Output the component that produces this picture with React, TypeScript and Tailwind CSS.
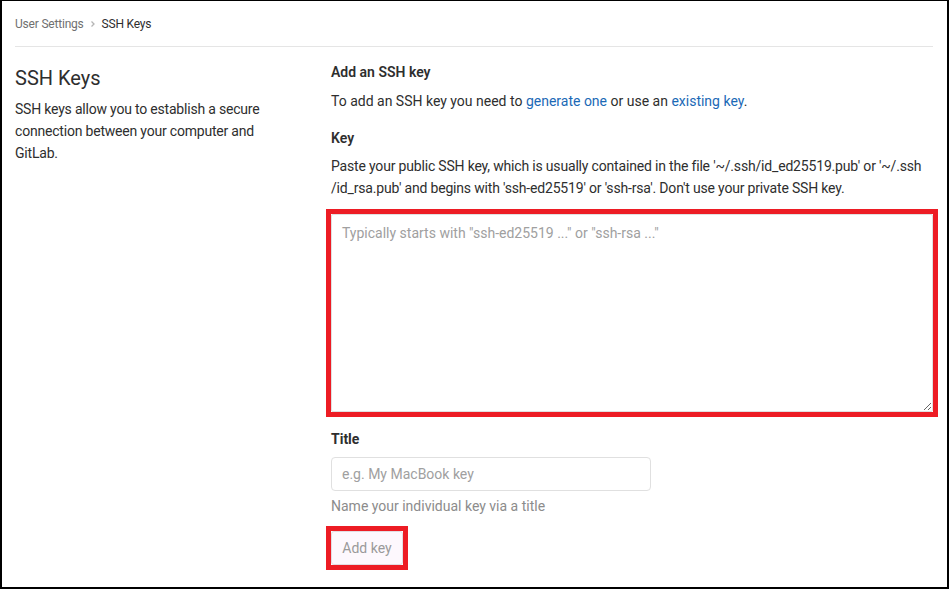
import React from "react";

export default function App() {
  const font = { fontFamily: "Roboto, 'Noto Sans', sans-serif" };
  return (
    <div
      className="w-[949px] h-[589px] bg-white border-black border-l-2 border-t border-r-2 border-b-2 overflow-hidden text-[#2e2e2e]"
      style={font}
    >
      <div className="pl-[13px] pr-[14px]">
        {/* breadcrumb */}
        <div className="h-[46px] flex items-center border-b border-[#e5e5e5] text-[12px] tracking-[-0.2px]">
          <span className="text-[#707070]">User Settings</span>
          <svg width="8" height="8" viewBox="0 0 8 8" className="mx-[5px]">
            <path d="M2.5 1.5 L5 4 L2.5 6.5" fill="none" stroke="#b5b5b5" strokeWidth="1.3" />
          </svg>
          <span className="text-[#2e2e2e]">SSH Keys</span>
        </div>

        <div className="flex gap-[30px]">
          {/* left column */}
          <div className="w-[286px] shrink-0">
            <h4 className="mt-[19px] text-[20px] leading-[24px] text-[#2e2e2e]">SSH Keys</h4>
            <p className="mt-[8px] w-[262px] text-[14px] leading-[22px] tracking-[-0.2px]">
              SSH keys allow you to establish a secure connection between your computer and GitLab.
            </p>
          </div>

          {/* right column */}
          <div className="flex-1 text-[14px]">
            <h5 className="mt-[15px] font-semibold leading-[20px]">Add an SSH key</h5>
            <p className="mt-[9px] leading-[20px]">
              To add an SSH key you need to{" "}
              <span className="text-[#1b69b6]">generate one</span> or use an{" "}
              <span className="text-[#1b69b6]">existing key</span>.
            </p>
            <div className="mt-[17px] font-semibold leading-[20px]">Key</div>
            <p className="mt-[7px] leading-[22px] whitespace-nowrap tracking-[-0.18px]">
              Paste your public SSH key, which is usually contained in the file '~/.ssh/id_ed25519.pub' or '~/.ssh
              <br />
              /id_rsa.pub' and begins with 'ssh-ed25519' or 'ssh-rsa'. Don't use your private SSH key.
            </p>
            <div className="mt-[10px] -ml-[5px] w-[612px] border-[5px] border-[#ed1c24]">
              <textarea
                className="block w-full h-[198px] border border-[#e0e0e0] rounded-[2px] px-[10px] py-[8px] text-[14px] outline-none resize-y placeholder:text-[#a0a0a0]"
                placeholder={'Typically starts with "ssh-ed25519 ..." or "ssh-rsa ..."'}
                style={font}
              />
            </div>
            <div className="mt-[12px] font-bold leading-[20px]">Title</div>
            <input
              className="mt-[8px] block w-[320px] h-[34px] border border-[#e0e0e0] rounded-[4px] px-[10px] text-[14px] outline-none placeholder:text-[#a0a0a0]"
              placeholder="e.g. My MacBook key"
              style={font}
            />
            <div className="mt-[5px] leading-[20px] text-[#8c8c8c]">Name your individual key via a title</div>
            <div className="mt-[10px] -ml-[5px] w-[82px] border-[5px] border-[#ed1c24]">
              <button
                className="block w-full h-[34px] border border-[#e2dde2] rounded-[3px] bg-[#fdf8fd] text-[#9a9a9a] text-[14px]"
                style={font}
              >
                Add key
              </button>
            </div>
          </div>
        </div>
      </div>
    </div>
  );
}
